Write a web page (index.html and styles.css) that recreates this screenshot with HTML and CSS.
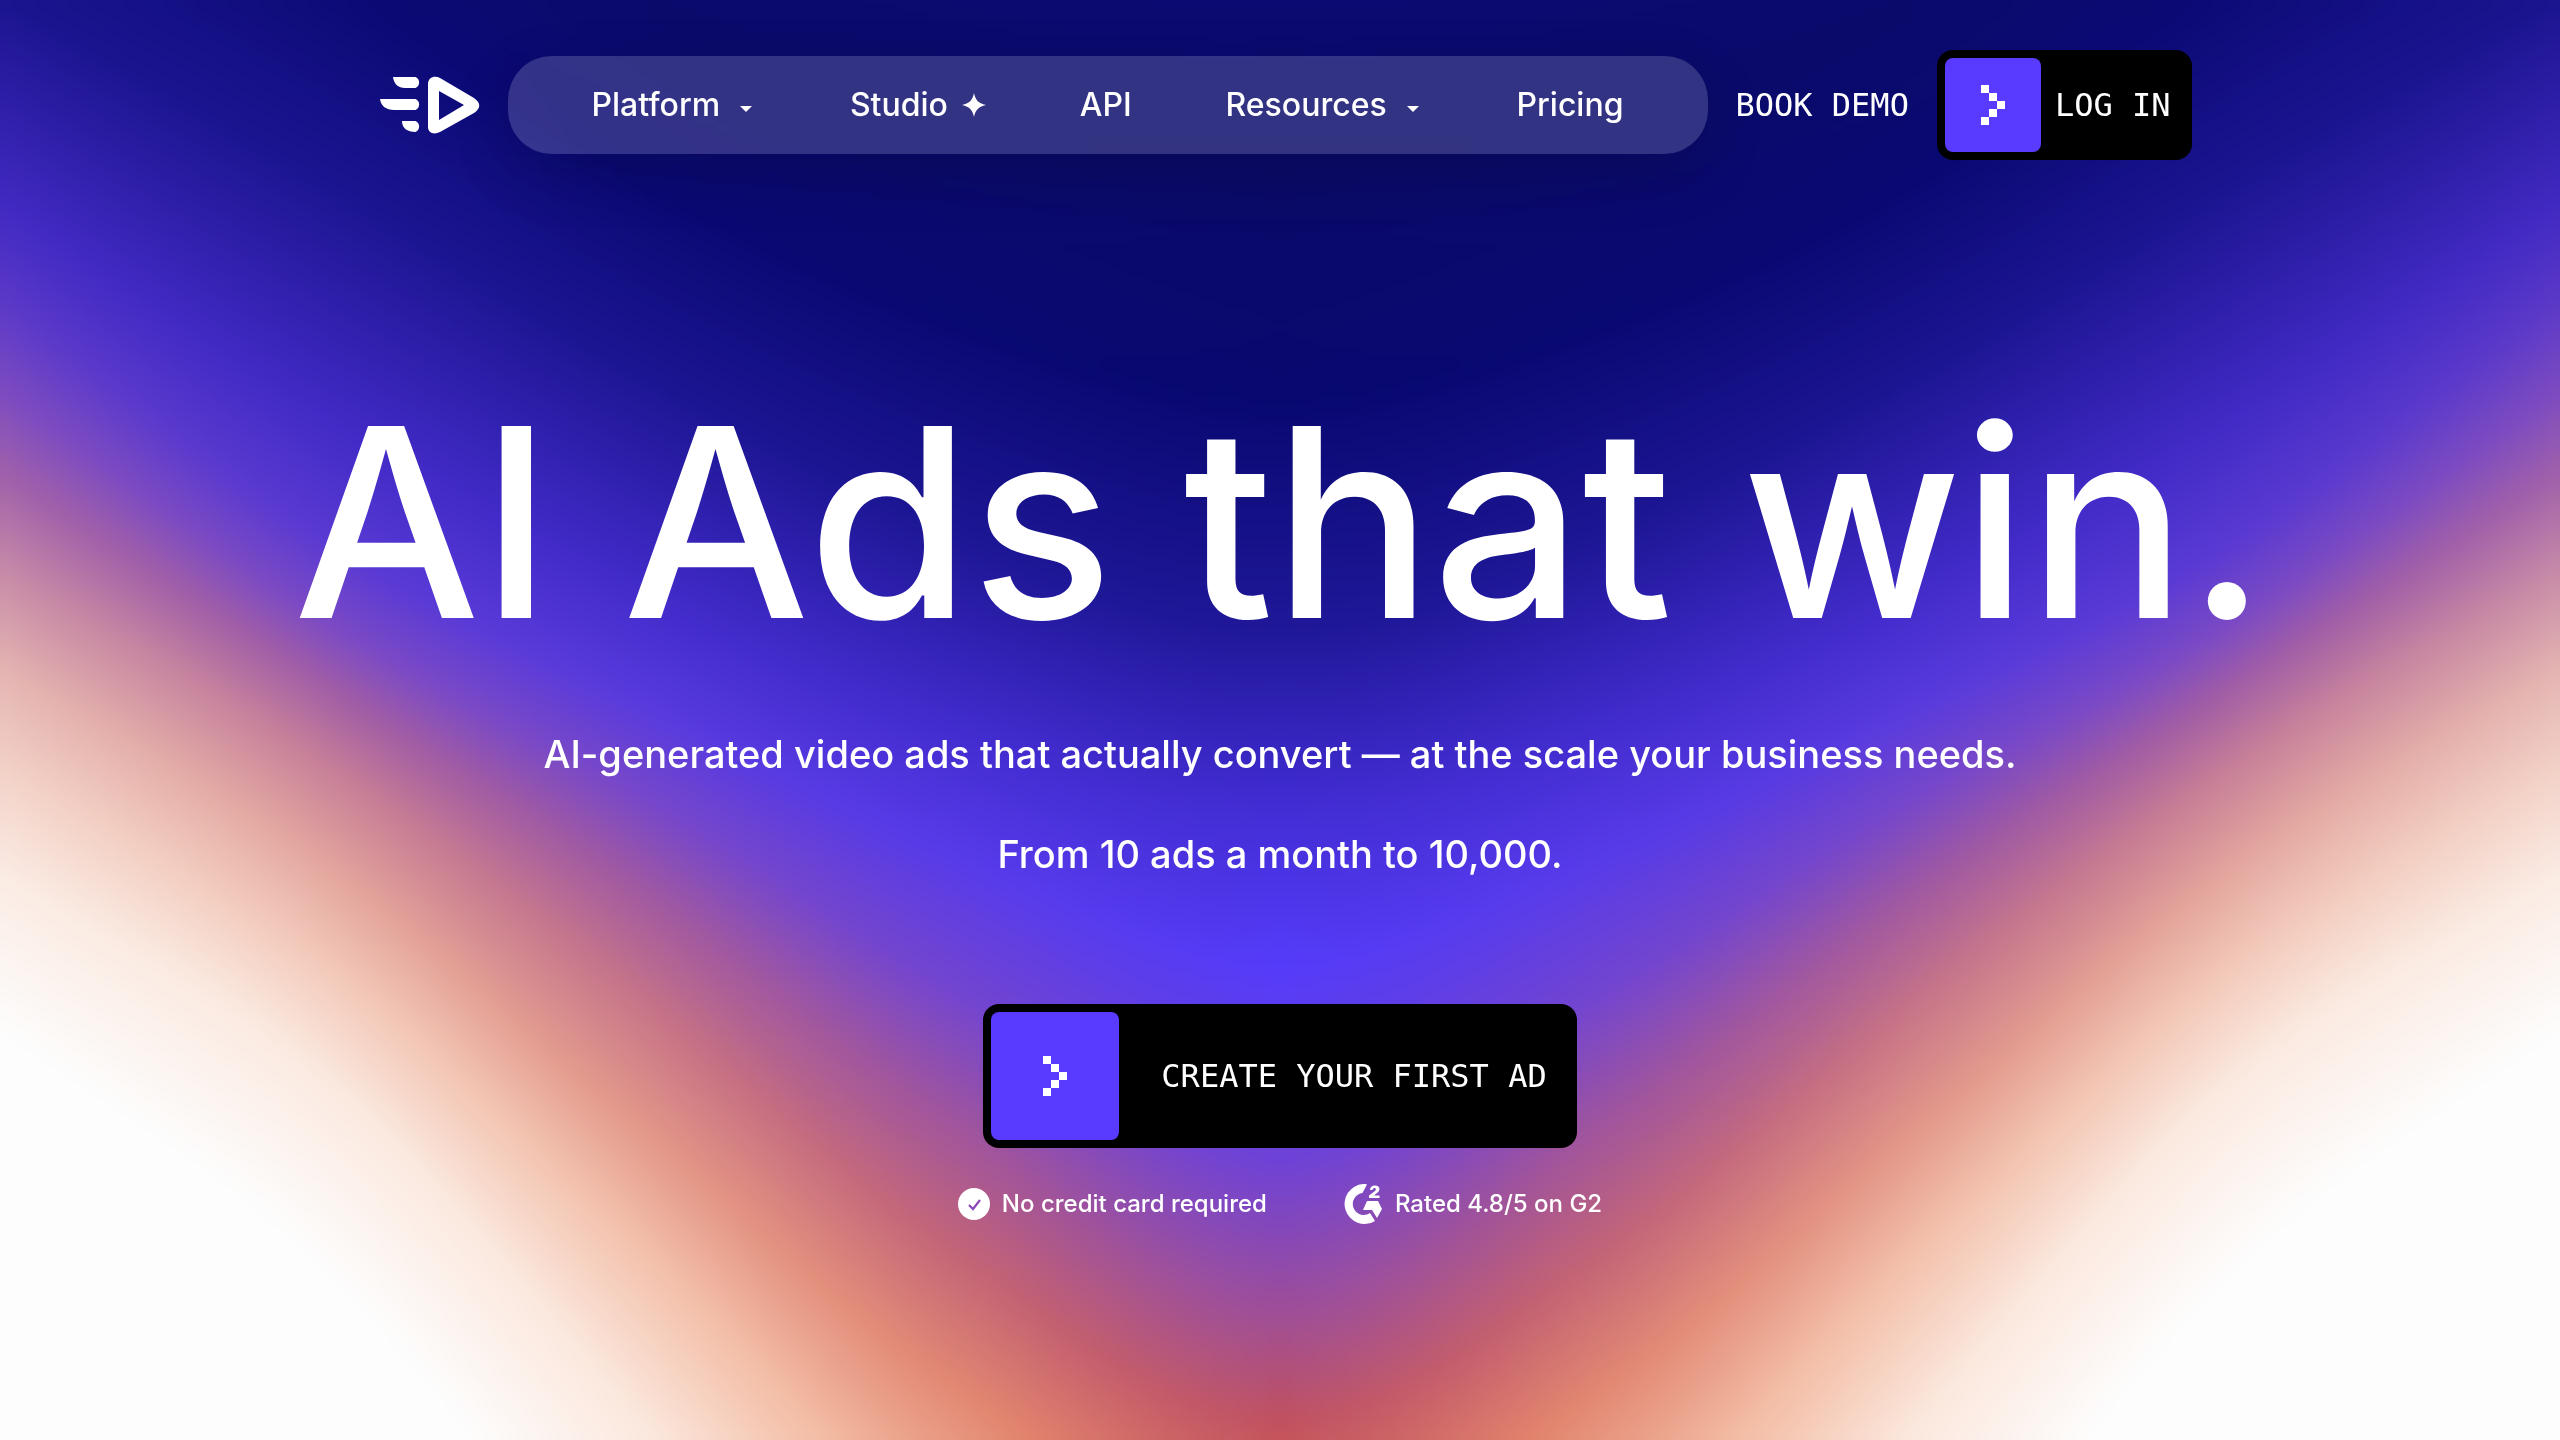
FILE: index.html
```html
<!DOCTYPE html>
<html lang="en">
<head>
<meta charset="utf-8">
<title>AI Ads that win.</title>
<link rel="stylesheet" href="styles.css">
</head>
<body>
<canvas class="backdrop" id="backdrop" width="320" height="180" aria-hidden="true"></canvas>
<header class="header">
  <a class="logo" href="#" aria-label="Home">
    <svg viewBox="0 0 100 58" width="100" height="58" fill="#fff">
      <path d="M13 1h22.500a6 6 0 0 1 0 11H25C18 12 14 8 13 1z"/>
      <path d="M0 23h35.500a6 6 0 0 1 0 11H14C6 34 1 30 0 23z"/>
      <path d="M22 45h13.500a6 6 0 0 1 0 11C27 56 22 52 22 45z"/>
      <path fill-rule="evenodd" d="M48 8c0-7 7-9 12-6l34 20c7 5 7 10 0 15L60 56c-6 3-12 1-12-5zM59 15v29l25-15z"/>
    </svg>
  </a>
  <nav class="nav">
    <button class="nav-item" type="button">Platform <span class="caret"></span></button>
    <a class="nav-item" href="#">Studio
      <svg class="spark" viewBox="0 0 24 24" width="24" height="24" fill="#fff"><path d="M12 0c1.500 7 4 10 12 12-8 2-10.500 5-12 12-1.500-7-4-10-12-12 8-2 10.500-5 12-12z"/></svg>
    </a>
    <a class="nav-item" href="#">API</a>
    <button class="nav-item" type="button">Resources <span class="caret"></span></button>
    <a class="nav-item" href="#">Pricing</a>
  </nav>
  <a class="demo" href="#">BOOK DEMO</a>
  <a class="cta cta-small" href="#">
    <span class="cta-icon"><svg viewBox="0 0 24 40" width="24" height="40" fill="#fff" shape-rendering="crispEdges"><path d="M0 0h8v8H0zM8 8h8v8H8zM16 16h8v8h-8zM8 24h8v8H8zM0 32h8v8H0z"/></svg></span>
    <span class="cta-label">LOG IN</span>
  </a>
</header>
<main class="hero">
  <h1 class="title">AI Ads that win.</h1>
  <p class="lead">AI-generated video ads that actually convert — at the scale your business needs.</p>
  <p class="lead">From 10 ads a month to 10,000.</p>
  <a class="cta cta-large" href="#">
    <span class="cta-icon"><svg viewBox="0 0 24 40" width="24" height="40" fill="#fff" shape-rendering="crispEdges"><path d="M0 0h8v8H0zM8 8h8v8H8zM16 16h8v8h-8zM8 24h8v8H8zM0 32h8v8H0z"/></svg></span>
    <span class="cta-label">CREATE YOUR FIRST AD</span>
  </a>
  <ul class="proof">
    <li class="proof-item">
      <svg viewBox="0 0 32 32" width="32" height="32"><circle cx="16" cy="16" r="16" fill="#fff"/><path d="M11 17l4 4 7-9" fill="none" stroke="#8a48bc" stroke-width="2.200"/></svg>
      No credit card required
    </li>
    <li class="proof-item">
      <svg viewBox="0 0 40 40" width="40" height="40" fill="#fff"><path d="M20 0c2 0 3 0 4 .4L19.500 9A11 11 0 1 0 27 29l5 8A20 20 0 1 1 20 0z"/><path d="M24 17h11l4 8-5 9-5-8H20z"/><path d="M27 6c0-3 2-4.500 5-4.500 5 0 6 5 2 7.500l-3 2.500h5.500V14H26v-2.500l6-4.500c1.500-1.500 1-3-.5-3S29.500 5 29.500 6z"/></svg>
      Rated 4.8/5 on G2
    </li>
  </ul>
</main>
<script src="backdrop.js"></script>
</body>
</html>
```
FILE: styles.css
```css
* { box-sizing: border-box; }

body {
  margin: 0;
  min-height: 100vh;
  background: #fdfdfd;
  color: #fff;
  font-family: Inter, "Liberation Sans", sans-serif;
  font-weight: 500;
  overflow-x: hidden;
}

a { color: inherit; text-decoration: none; }

.backdrop {
  position: absolute;
  inset: 0;
  z-index: -1;
  width: 100%;
  height: 100%;
}

.header {
  display: flex;
  align-items: center;
  justify-content: center;
  gap: 28px;
  padding: 50px 24px 0 36px;
}

.logo { display: flex; }

.nav {
  display: flex;
  align-items: center;
  justify-content: space-between;
  width: 1200px;
  height: 98px;
  padding: 0 84px;
  border-radius: 44px;
  background: rgba(255, 255, 255, 0.17);
  box-shadow: 0 20px 60px rgba(0, 0, 0, 0.15);
}

.nav-item {
  display: flex;
  align-items: center;
  padding: 0;
  border: 0;
  background: none;
  color: inherit;
  font: inherit;
  font-size: 32px;
  line-height: 40px;
}

.caret {
  margin: 8px 4px 0 20px;
  border: 6px solid transparent;
  border-top-color: #fff;
  border-bottom: 0;
}

.spark { margin-left: 14px; }

.demo,
.cta-label {
  font-family: "DejaVu Sans Mono", monospace;
  font-weight: 400;
  font-size: 32px;
  line-height: 40px;
  white-space: nowrap;
}

.cta {
  display: flex;
  align-items: center;
  padding: 8px;
  border-radius: 16px;
  background: #000;
}

.cta-icon {
  display: flex;
  align-items: center;
  justify-content: center;
  border-radius: 8px;
  background: #583bff;
}

.cta-small { padding-right: 22px; gap: 14px; }
.cta-small .cta-icon { width: 96px; height: 94px; }

.cta-large { gap: 42px; margin-top: 100px; padding-right: 30px; }
.cta-large .cta-icon { width: 128px; height: 128px; }

.hero {
  display: flex;
  flex-direction: column;
  align-items: center;
  padding-top: 202px;
}

.title {
  margin: 0 0 22px;
  font-size: 264px;
  font-weight: 500;
  line-height: 320px;
  white-space: nowrap;
}

.lead {
  margin: 0;
  font-size: 38px;
  line-height: 100px;
}

.proof {
  display: flex;
  gap: 76px;
  margin: 32px 0 0;
  padding: 0;
  list-style: none;
}

.proof-item {
  display: flex;
  align-items: center;
  gap: 12px;
  font-size: 24px;
  line-height: 48px;
}
```
FILE: backdrop.js
```js
// Each band: its depth at five steps from the side edge to the centre line
// (on an 882-high page), then its colour at the centre and at the edge.
const bands = [
  [[-460, -320, -180, -100, -60], [11, 10, 120], [11, 10, 120]],
  [[-300, -150, 0, 70, 100], [10, 10, 104], [10, 10, 110]],
  [[-150, -20, 110, 195, 240], [8, 8, 112], [12, 10, 118]],
  [[-5, 108, 230, 330, 385], [32, 24, 154], [26, 20, 142]],
  [[125, 255, 362, 448, 495], [67, 46, 214], [66, 42, 194]],
  [[185, 330, 432, 525, 590], [85, 60, 252], [92, 58, 200]],
  [[240, 378, 488, 610, 710], [110, 66, 216], [126, 76, 192]],
  [[292, 418, 545, 690, 805], [160, 78, 150], [162, 98, 170]],
  [[350, 466, 610, 770, 872], [194, 80, 92], [200, 140, 168]],
  [[408, 528, 690, 852, 955], [226, 112, 80], [228, 180, 178]],
  [[470, 590, 765, 955, 1075], [244, 170, 134], [243, 210, 200]],
  [[535, 660, 870, 1110, 1240], [252, 226, 212], [251, 236, 228]],
  [[630, 775, 1010, 1280, 1420], [253, 253, 253], [253, 253, 253]]
];

// Smooth curve through the five depths, mirrored at the centre.
function depthAt(d, u) {
  const p = [2 * d[0] - d[1], ...d, d[3]];
  const i = Math.min(3, Math.floor(u * 4));
  const t = u * 4 - i;
  const [a, b, c, e] = p.slice(i, i + 4);
  return b + 0.5 * t * (c - a + t * (2 * a - 5 * b + 4 * c - e + t * (3 * (b - c) + e - a)));
}

const canvas = document.getElementById("backdrop");
const ctx = canvas.getContext("2d");
const image = ctx.createImageData(canvas.width, canvas.height);

for (let px = 0; px < canvas.width; px++) {
  const side = Math.abs((px + 0.5) / canvas.width * 2 - 1);
  const column = bands.map(([depths, a, b]) => ({
    y: depthAt(depths, 1 - side),
    c: a.map((v, i) => v + (b[i] - v) * Math.sqrt(side) * (0.4 + 0.6 * Math.sqrt(side)))
  }));
  for (let py = 0; py < canvas.height; py++) {
    const y = (py + 0.5) / canvas.height * 882;
    let n = 1;
    while (n < column.length - 1 && column[n].y < y) n++;
    const from = column[n - 1];
    const to = column[n];
    const t = Math.min(1, Math.max(0, (y - from.y) / (to.y - from.y)));
    const at = (py * canvas.width + px) * 4;
    for (let i = 0; i < 3; i++) image.data[at + i] = from.c[i] + (to.c[i] - from.c[i]) * t;
    image.data[at + 3] = 255;
  }
}
ctx.putImageData(image, 0, 0);
```
